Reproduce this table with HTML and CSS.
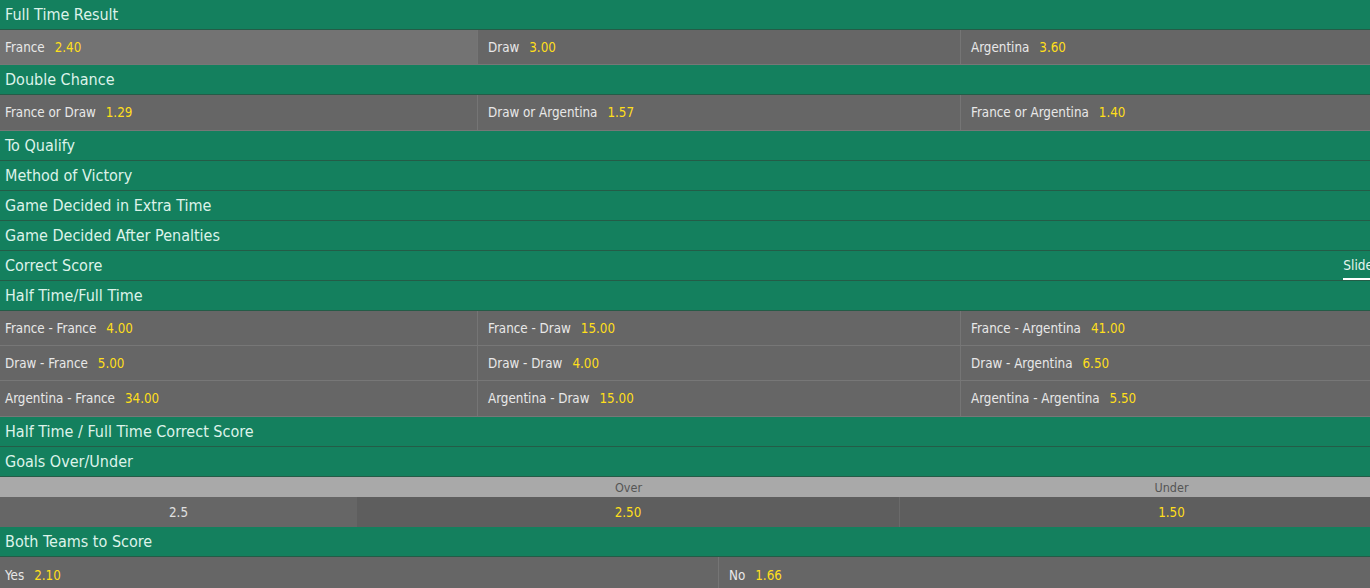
FILE: index.html
```html
<!DOCTYPE html>
<html lang="en">
<head>
  <meta charset="UTF-8">
  <meta name="viewport" content="width=device-width, initial-scale=1.0">
  <title>France v Argentina - Markets</title>
  <link rel="stylesheet" href="styles.css">
</head>
<body>
  <div class="markets">

    <!-- Full Time Result -->
    <div class="market-header">Full Time Result</div>
    <div class="row cols-3">
      <div class="cell active"><span class="name">France</span><span class="odds">2.40</span></div>
      <div class="cell"><span class="name">Draw</span><span class="odds">3.00</span></div>
      <div class="cell"><span class="name">Argentina</span><span class="odds">3.60</span></div>
    </div>

    <!-- Double Chance -->
    <div class="market-header">Double Chance</div>
    <div class="row cols-3 tall">
      <div class="cell"><span class="name">France or Draw</span><span class="odds">1.29</span></div>
      <div class="cell"><span class="name">Draw or Argentina</span><span class="odds">1.57</span></div>
      <div class="cell"><span class="name">France or Argentina</span><span class="odds">1.40</span></div>
    </div>

    <!-- Collapsed markets -->
    <div class="market-header">To Qualify</div>
    <div class="market-header">Method of Victory</div>
    <div class="market-header">Game Decided in Extra Time</div>
    <div class="market-header">Game Decided After Penalties</div>
    <div class="market-header">
      <span>Correct Score</span>
      <span class="tab">Slider</span>
    </div>

    <!-- Half Time/Full Time -->
    <div class="market-header">Half Time/Full Time</div>
    <div class="row cols-3">
      <div class="cell"><span class="name">France - France</span><span class="odds">4.00</span></div>
      <div class="cell"><span class="name">France - Draw</span><span class="odds">15.00</span></div>
      <div class="cell"><span class="name">France - Argentina</span><span class="odds">41.00</span></div>
    </div>
    <div class="row cols-3">
      <div class="cell"><span class="name">Draw - France</span><span class="odds">5.00</span></div>
      <div class="cell"><span class="name">Draw - Draw</span><span class="odds">4.00</span></div>
      <div class="cell"><span class="name">Draw - Argentina</span><span class="odds">6.50</span></div>
    </div>
    <div class="row cols-3 tall">
      <div class="cell"><span class="name">Argentina - France</span><span class="odds">34.00</span></div>
      <div class="cell"><span class="name">Argentina - Draw</span><span class="odds">15.00</span></div>
      <div class="cell"><span class="name">Argentina - Argentina</span><span class="odds">5.50</span></div>
    </div>

    <div class="market-header">Half Time / Full Time Correct Score</div>

    <!-- Goals Over/Under -->
    <div class="market-header">Goals Over/Under</div>
    <div class="ou-labels cols-ou">
      <div></div>
      <div>Over</div>
      <div>Under</div>
    </div>
    <div class="ou-row cols-ou">
      <div class="line">2.5</div>
      <div class="price">2.50</div>
      <div class="price">1.50</div>
    </div>

    <!-- Both Teams to Score -->
    <div class="market-header">Both Teams to Score</div>
    <div class="row cols-2">
      <div class="cell"><span class="name">Yes</span><span class="odds">2.10</span></div>
      <div class="cell"><span class="name">No</span><span class="odds">1.66</span></div>
    </div>

  </div>
</body>
</html>
```

FILE: styles.css
```css
/* General Styles */
body {
  margin: 0;
  padding: 0;
  background-color: #666666;
  font-family: Tahoma, 'DejaVu Sans Condensed', 'Liberation Sans', sans-serif;
  overflow: hidden;
}

.markets {
  display: flex;
  flex-direction: column;
}

/* Green market headers */
.market-header {
  display: flex;
  justify-content: space-between;
  align-items: center;
  flex-shrink: 0;
  height: 29px;
  padding-left: 5px;
  background-color: #14805e;
  border-bottom: 1px solid #245c47;
  color: #ddf3ea;
  font-size: 16px;
}

.market-header .tab {
  align-self: flex-end;
  margin-right: -8px;
  padding-bottom: 5px;
  border-bottom: 2px solid #ffffff;
  font-size: 13.5px;
  color: #e4f6ee;
}

/* Selection rows */
.row {
  display: grid;
  flex-shrink: 0;
  height: 34px;
  background-color: #666666;
  border-bottom: 1px solid #777777;
}

.row.tall {
  height: 35px;
}

.cols-3 {
  grid-template-columns: 478px 483px 1fr;
}

.cols-2 {
  grid-template-columns: 719px 1fr;
  border-bottom: none;
  height: 36px;
}

.cell {
  display: flex;
  align-items: center;
  padding-left: 5px;
  border-right: 1px solid #757575;
  font-size: 13.3px;
}

.cell:last-child {
  border-right: none;
}

.cols-3 .cell:nth-child(2),
.cols-3 .cell:nth-child(3) {
  padding-left: 10px;
}

.cols-2 .cell:nth-child(2) {
  padding-left: 10px;
}

.cell.active {
  background-color: #737373;
}

.name {
  color: #e8e8e8;
}

.odds {
  margin-left: 10px;
  color: #ffdf1b;
}

/* Over / Under table */
.cols-ou {
  display: grid;
  grid-template-columns: 357px 543px 543px;
}

.ou-labels {
  flex-shrink: 0;
  height: 20px;
  background-color: #a9a9a9;
  color: #555555;
  font-size: 12.5px;
}

.ou-labels div,
.ou-row div {
  display: flex;
  align-items: center;
  justify-content: center;
}

.ou-row {
  flex-shrink: 0;
  height: 30px;
  background-color: #5e5e5e;
  font-size: 13.3px;
}

.ou-row .line {
  background-color: #666666;
  color: #e0e0e0;
}

.ou-row .price {
  color: #ffdf1b;
}

.ou-row .price:nth-child(2) {
  border-right: 1px solid #6a6a6a;
}
```
